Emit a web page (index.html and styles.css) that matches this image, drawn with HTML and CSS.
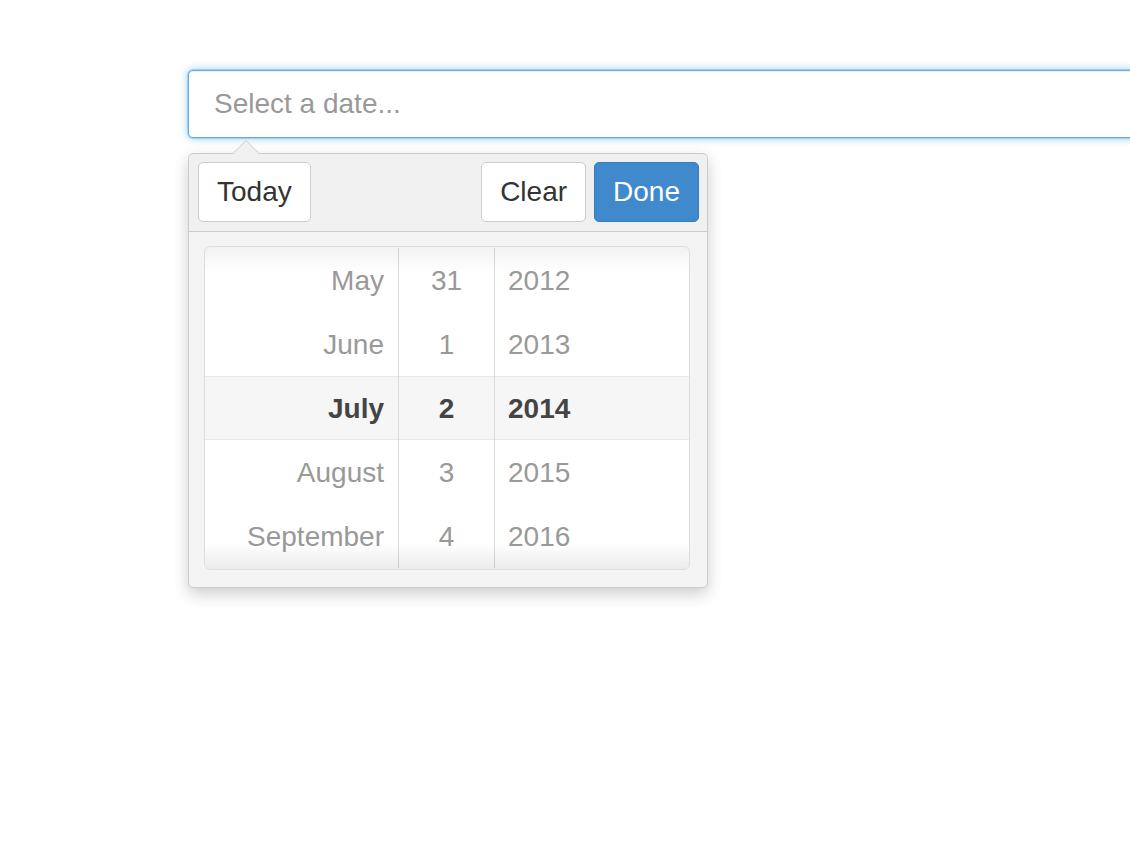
FILE: index.html
```html
<!DOCTYPE html>
<html>
<head>
<meta charset="utf-8">
<link rel="stylesheet" href="styles.css">
</head>
<body>
<div class="page">
  <div class="field">
    <input class="date-input" type="text" placeholder="Select a date...">
  </div>
  <div class="popover">
    <div class="caret"></div>
    <div class="pop-header">
      <button class="btn">Today</button>
      <div class="spacer"></div>
      <button class="btn">Clear</button>
      <button class="btn btn-primary">Done</button>
    </div>
    <div class="pop-body">
      <div class="wheel">
        <div class="col col-month">
          <div class="cell">May</div>
          <div class="cell">June</div>
          <div class="cell sel">July</div>
          <div class="cell">August</div>
          <div class="cell">September</div>
        </div>
        <div class="col col-day">
          <div class="cell">31</div>
          <div class="cell">1</div>
          <div class="cell sel">2</div>
          <div class="cell">3</div>
          <div class="cell">4</div>
        </div>
        <div class="col col-year">
          <div class="cell">2012</div>
          <div class="cell">2013</div>
          <div class="cell sel">2014</div>
          <div class="cell">2015</div>
          <div class="cell">2016</div>
        </div>
      </div>
    </div>
  </div>
</div>
</body>
</html>
```

FILE: styles.css
```css
html, body {
  margin: 0;
  padding: 0;
  background: #fff;
  overflow: hidden;
}
body {
  font-family: "Liberation Sans", Arial, Helvetica, sans-serif;
}
.page {
  padding: 60px 0 40px 178px;
  width: 952px;
  overflow: hidden;
}
.field {
  padding: 10px 0 0 10px;
}
.date-input {
  display: block;
  box-sizing: border-box;
  width: 980px;
  height: 68px;
  margin: 0;
  padding: 0 25px;
  font-family: "Liberation Sans", Arial, sans-serif;
  font-size: 28px;
  color: #555;
  border: 1px solid #66afe9;
  border-radius: 5px;
  outline: none;
  box-shadow: inset 0 1px 1px rgba(0,0,0,.075), 0 0 0 1px rgba(102,175,233,.45), 0 0 9px rgba(102,175,233,.7);
}
.date-input::placeholder {
  color: #999;
}
.popover {
  position: relative;
  box-sizing: border-box;
  width: 520px;
  margin: 15px 0 0 10px;
  border: 1px solid #ccc;
  border-radius: 5px;
  background: #f4f4f4;
  box-shadow: 0 6px 16px rgba(0,0,0,.2);
}
.caret {
  position: absolute;
  top: -14px;
  left: 43px;
  width: 0;
  height: 0;
  border-left: 14px solid transparent;
  border-right: 14px solid transparent;
  border-bottom: 14px solid #ccc;
}
.caret::after {
  content: "";
  position: absolute;
  top: 1px;
  left: -13px;
  border-left: 13px solid transparent;
  border-right: 13px solid transparent;
  border-bottom: 13px solid #f0f0f0;
}
.pop-header {
  display: flex;
  align-items: center;
  gap: 8px;
  padding: 8px 8px 9px 9px;
  background: #f0f0f0;
  border-bottom: 1px solid #ccc;
  border-radius: 5px 5px 0 0;
}
.spacer {
  flex: 1;
}
.btn {
  box-sizing: border-box;
  height: 60px;
  padding: 0 18px;
  font-family: "Liberation Sans", Arial, sans-serif;
  font-size: 28px;
  color: #333;
  background: #fff;
  border: 1px solid #ccc;
  border-radius: 5px;
}
.btn-primary {
  color: #fff;
  background: #3f89cc;
  border-color: #357ebd;
}
.pop-body {
  padding: 14px 17px 17px 15px;
}
.wheel {
  position: relative;
  display: flex;
  padding: 1px 0;
  background: #fff;
  border: 1px solid #ddd;
  border-radius: 6px;
  overflow: hidden;
}
.wheel::before,
.wheel::after {
  content: "";
  position: absolute;
  left: 0;
  right: 0;
  height: 26px;
  pointer-events: none;
}
.wheel::before {
  top: 0;
  background: linear-gradient(to bottom, rgba(0,0,0,.05), rgba(0,0,0,0));
}
.wheel::after {
  bottom: 0;
  background: linear-gradient(to top, rgba(0,0,0,.08), rgba(0,0,0,0));
}
.col {
  display: flex;
  flex-direction: column;
}
.col-month {
  width: 193px;
  border-right: 1px solid #ddd;
  text-align: right;
}
.col-month .cell {
  padding-right: 14px;
}
.col-day {
  width: 95px;
  border-right: 1px solid #ddd;
  text-align: center;
}
.col-year {
  flex: 1;
  text-align: left;
}
.col-year .cell {
  padding-left: 13px;
}
.cell {
  box-sizing: border-box;
  height: 64px;
  line-height: 66px;
  font-size: 28px;
  color: #999;
}
.cell.sel {
  line-height: 64px;
  font-weight: bold;
  color: #444;
  background: #f6f6f6;
  border-top: 1px solid #e8e8e8;
  border-bottom: 1px solid #e8e8e8;
}
```
